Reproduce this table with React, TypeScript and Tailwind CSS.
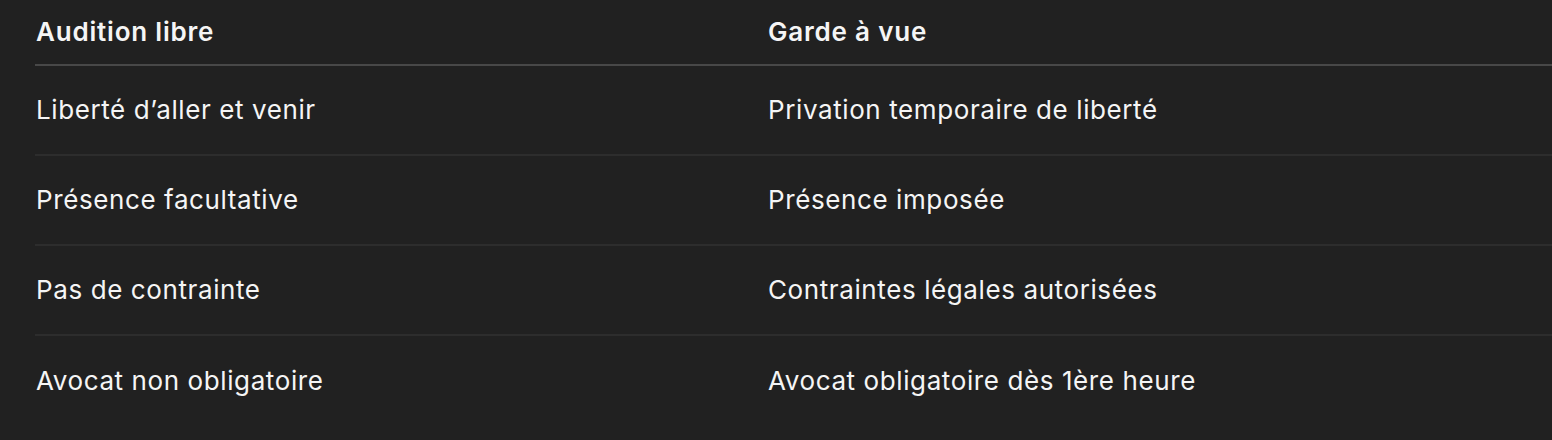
import React from "react";

const rows: [string, string][] = [
  ["Liberté d’aller et venir", "Privation temporaire de liberté"],
  ["Présence facultative", "Présence imposée"],
  ["Pas de contrainte", "Contraintes légales autorisées"],
  ["Avocat non obligatoire", "Avocat obligatoire dès 1ère heure"],
];

export default function App() {
  return (
    <div
      className="w-[1552px] h-[440px] bg-[#212121] text-[#f5f5f5] overflow-hidden pl-[35px]"
      style={{ fontFamily: "Inter, 'Noto Sans', sans-serif" }}
    >
      <div className="grid grid-cols-[733px_1fr] h-[66px] items-center border-b-2 border-[#484848] text-[26px] leading-[32px] font-semibold tracking-[0.8px]">
        <div className="pl-[1px]">Audition libre</div>
        <div>Garde à vue</div>
      </div>
      {rows.map(([a, b], i) => (
        <div
          key={i}
          className={`grid grid-cols-[733px_1fr] h-[90px] items-center text-[26px] leading-[32px] tracking-[0.6px] ${
            i < rows.length - 1 ? "border-b-2 border-[#2d2d2d]" : ""
          }`}
        >
          <div className="pl-[1px]">{a}</div>
          <div>{b}</div>
        </div>
      ))}
    </div>
  );
}
